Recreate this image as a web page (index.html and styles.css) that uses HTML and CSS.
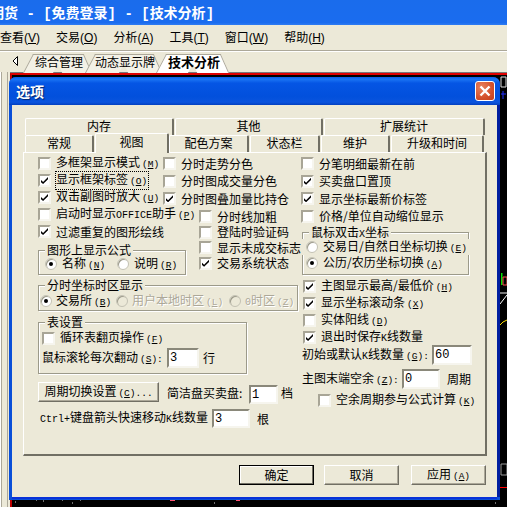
FILE: index.html
```html
<!DOCTYPE html>
<html lang="zh-CN">
<head>
  <meta charset="UTF-8">
  <title>选项</title>
  <link rel="stylesheet" href="styles.css">
</head>
<body>
  <div id="app">
    <div class="app-title">期货<span class="mono"> - [</span>免费登录<span class="mono">] - [</span>技术分析<span class="mono">]</span></div>

    <div class="menu">
      <span>查看<i>(<u>V</u>)</i></span>
      <span>交易<i>(<u>O</u>)</i></span>
      <span>分析<i>(<u>A</u>)</i></span>
      <span>工具<i>(<u>T</u>)</i></span>
      <span>窗口<i>(<u>W</u>)</i></span>
      <span>帮助<i>(<u>H</u>)</i></span>
    </div>

    <div class="main">
      <div class="side"></div>
      <div class="work">
        <div class="sheets">
          <svg class="sheet-arrow" width="7" height="10" viewBox="0 0 7 10"><path d="M5.5 .5 L1 5 L5.5 9.5 Z" fill="#fff" stroke="#000"/></svg>
          <span class="sheet">综合管理</span>
          <span class="sheet sheet-mid">动态显示牌</span>
          <span class="sheet sheet-on">技术分析</span>
        </div>
        <div class="chart">
          <!-- bits of the chart that stick out beside the dialog -->
          <svg class="chart-bits" width="497" height="434" viewBox="10 73 497 434">
            <path d="M501 77h5v10h-5z" fill="none" stroke="#ddd"/>
            <path d="M501 94h5M503 91v8" stroke="#2030ff"/>
            <path d="M501 273h1.500v12H501z" fill="#00e000"/>
            <path d="M503 277h4v8h-4z" fill="none" stroke="#ff5050"/>
            <path d="M500 292h7v2h-7z" fill="#777"/>
            <path d="M500 304l7-9" stroke="#fff"/>
            <path d="M500 325l3-3 4-2" stroke="#ffe000" fill="none"/>
            <path d="M501 464h6v11h-6z" fill="none" stroke="#999"/>
            <path d="M500 487.500h7" stroke="#f00"/>
            <path d="M170 500.500h5M236 500.500h4" stroke="#ff5070"/>
            <path d="M15 502h1M36 500h1M43 501h1M62 500h1M72 503h1M80 500h1M214 503h1M495 503h1" stroke="#ddd"/>
          </svg>
        </div>
      </div>
    </div>

    <div class="dialog">
      <div class="dialog-title">
        <span>选项</span>
        <button class="close">
          <svg width="12" height="12" viewBox="0 0 12 12"><path d="M1.500 1.500 L10.500 10.500 M10.500 1.500 L1.500 10.500" stroke="#fff" stroke-width="2.400"/></svg>
        </button>
      </div>

      <div class="dialog-body">
        <div class="tabs tabs-back">
          <div class="tab">内存</div>
          <div class="tab">其他</div>
          <div class="tab">扩展统计</div>
        </div>
        <div class="tabs tabs-front">
          <div class="tab">常规</div>
          <div class="tab tab-on">视图</div>
          <div class="tab">配色方案</div>
          <div class="tab">状态栏</div>
          <div class="tab">维护</div>
          <div class="tab">升级和时间</div>
        </div>

        <div class="page">
          <div class="left">
            <div class="upper">
              <div class="stack-a">
                <label class="check"><b class="box"></b><span>多框架显示模式<span class="key">(<u>M</u>)</span></span></label>
                <label class="check"><b class="box on"></b><span class="focus">显示框架标签<span class="key">(<u>O</u>)</span></span></label>
                <label class="check"><b class="box on"></b><span>双击副图时放大<span class="key">(<u>U</u>)</span></span></label>
                <label class="check"><b class="box"></b><span>启动时显示<span class="mono">OFFICE</span>助手<span class="key">(<u>P</u>)</span></span></label>
                <label class="check"><b class="box on"></b><span>过滤重复的图形绘线</span></label>

                <div class="group group-formula">
                  <span class="group-title">图形上显示公式</span>
                  <div class="radios">
                    <label class="radio radio-name"><b class="dot on"></b><span>名称<span class="key">(<u>N</u>)</span></span></label>
                    <label class="radio"><b class="dot"></b><span>说明<span class="key">(<u>R</u>)</span></span></label>
                  </div>
                </div>
              </div>

              <div class="stack-b">
                <label class="check wide"><b class="box"></b><span>分时走势分色</span></label>
                <label class="check wide"><b class="box"></b><span>分时图成交量分色</span></label>
                <label class="check wide"><b class="box on"></b><span>分时图叠加量比持仓</span></label>
                <label class="check thin first-thin"><b class="box"></b><span>分时线加粗</span></label>
                <label class="check thin"><b class="box"></b><span>登陆时验证码</span></label>
                <label class="check thin"><b class="box"></b><span>显示未成交标志</span></label>
                <label class="check thin"><b class="box on"></b><span>交易系统状态</span></label>
              </div>
            </div>

            <div class="group group-zone">
              <span class="group-title">分时坐标时区显示</span>
              <div class="zone-row">
                <label class="zone zone-1"><b class="dot on"></b><span>交易所<span class="key">(<u>B</u>)</span></span></label>
                <label class="zone zone-2 off"><b class="dot"></b><span>用户本地时区<span class="key">(<u>L</u>)</span></span></label>
                <label class="zone off"><b class="dot"></b><span><span class="mono">0</span>时区<span class="key">(<u>Z</u>)</span></span></label>
              </div>
            </div>

            <div class="group group-table">
              <span class="group-title">表设置</span>
              <label class="check"><b class="box"></b><span>循环表翻页操作<span class="key">(<u>F</u>)</span></span></label>
              <div class="field">
                <span class="cap-wheel">鼠标滚轮每次翻动<span class="key">(<u>S</u>):</span></span>
                <input class="num num-wheel" value="3">
                <span>行</span>
              </div>
            </div>

            <div class="cycle-row">
              <button class="btn btn-cycle">周期切换设置<span class="key">(<u>C</u>)...</span></button>
              <span class="cap-simple">简洁盘买卖盘:</span>
              <input class="num num-simple" value="1">
              <span>档</span>
            </div>

            <div class="field ctrl-row">
              <span class="cap-ctrl"><span class="mono">Ctrl+</span>键盘箭头快速移动<span class="mono">K</span>线数量</span>
              <input class="num num-ctrl" value="3">
              <span>根</span>
            </div>
          </div>

          <div class="right">
            <label class="check wide"><b class="box"></b><span>分笔明细最新在前</span></label>
            <label class="check wide"><b class="box on"></b><span>买卖盘口置顶</span></label>
            <label class="check wide"><b class="box on"></b><span>显示坐标最新价标签</span></label>
            <label class="check wide"><b class="box"></b><span>价格/单位自动缩位显示</span></label>

            <div class="group group-mouse">
              <span class="group-title">鼠标双击<span class="mono">X</span>坐标</span>
              <label class="radio-line radio-cover"><b class="dot"></b><span>交易日/自然日坐标切换<span class="key">(<u>E</u>)</span></span></label>
              <label class="radio-line"><b class="dot on"></b><span>公历/农历坐标切换<span class="key">(<u>A</u>)</span></span></label>
            </div>

            <div class="right-checks">
              <label class="check"><b class="box on"></b><span>主图显示最高/最低价<span class="key">(<u>H</u>)</span></span></label>
              <label class="check"><b class="box on"></b><span>显示坐标滚动条<span class="key">(<u>X</u>)</span></span></label>
              <label class="check"><b class="box"></b><span>实体阳线<span class="key">(<u>D</u>)</span></span></label>
              <label class="check"><b class="box on"></b><span>退出时保存<span class="mono">K</span>线数量</span></label>
            </div>

            <div class="field field-count">
              <span class="cap-count">初始或默认<span class="mono">K</span>线数量<span class="key">(<u>G</u>):</span></span>
              <input class="num num-count" value="60">
            </div>
            <div class="field field-tail">
              <span class="cap-tail">主图末端空余<span class="key">(<u>Z</u>):</span></span>
              <input class="num num-tail" value="0">
              <span>周期</span>
            </div>
            <label class="check check-formula"><b class="box"></b><span>空余周期参与公式计算<span class="key">(<u>K</u>)</span></span></label>
          </div>
        </div>

        <div class="actions">
          <button class="btn btn-ok">确定</button>
          <button class="btn btn-cancel">取消</button>
          <button class="btn btn-apply">应用<span class="key">(<u>A</u>)</span></button>
        </div>
      </div>
    </div>
  </div>
</body>
</html>
```

FILE: styles.css
```css
:root {
  --face: #ece9d8;
  --etch: #9c9a8a;
  --dark: #716f64;
}

* {
  box-sizing: border-box;
  margin: 0;
  padding: 0;
}

body {
  width: 507px;
  height: 507px;
  overflow: hidden;
  font-family: 'Noto Sans CJK SC', sans-serif;
  font-size: 12px;
  line-height: 14px;
  color: #000;
  background: var(--face);
}

#app {
  position: relative;
  width: 507px;
  height: 507px;
  display: flex;
  flex-direction: column;
}

.mono {
  font-family: 'Liberation Mono', monospace;
  font-size: 10px;
}

.key {
  font-family: 'Liberation Mono', monospace;
  font-size: 9.500px;
  margin-left: 2px;
}

/* main window */
.app-title {
  height: 25px;
  line-height: 24px;
  margin-left: -10px;
  font-size: 14px;
  font-weight: 700;
  color: #fff;
  white-space: pre;
  background: linear-gradient(#1a6cec, #1a6cef 90%, #2f7cf2);
  box-shadow: 10px 0 0 #1a6cec, -10px 0 0 #1a6cec;
}

.app-title .mono {
  font-size: 14px;
  font-weight: 700;
}

.menu {
  height: 25px;
  display: flex;
  align-items: center;
  gap: 16px;
  white-space: nowrap;
}

.menu i {
  font-family: 'Liberation Sans', sans-serif;
  font-style: normal;
}

.main {
  flex: 1;
  display: flex;
  min-height: 0;
  border-top: 1px solid #aca899;
  box-shadow: inset 0 1px 0 #fff;
}

.side {
  width: 10px;
  margin-top: 21px;
  border-left: 1px solid #fff;
  background: linear-gradient(90deg, #aca899 0 1px, var(--face) 1px 6px, #aca899 6px 7px, var(--face) 7px);
}

.work {
  flex: 1;
  display: flex;
  flex-direction: column;
}

.sheets {
  height: 22px;
  display: flex;
  align-items: flex-end;
  padding-left: 13px;
  position: relative;
}

.sheet-arrow {
  position: absolute;
  left: 2px;
  top: 5px;
}

.sheet {
  position: relative;
  isolation: isolate;
  height: 19px;
  line-height: 16px;
  padding: 0 10px 0 12px;
  white-space: nowrap;
}

.sheet::before,
.sheet::after {
  content: "";
  position: absolute;
  top: 0;
  bottom: 0;
  z-index: -1;
  background: #f3f1e6;
  border-top: 1px solid #aca899;
}

.sheet::before {
  left: 5px;
  right: 50%;
  transform: skewX(-28deg);
  border-left: 1px solid #aca899;
}

.sheet::after {
  left: 50%;
  right: 5px;
  transform: skewX(24deg);
  border-right: 1px solid #aca899;
}

.sheet-mid {
  margin-left: -8px;
  padding: 0 8px 0 10px;
}

.sheet-on {
  margin-left: -7px;
  font-size: 13px;
  font-weight: 700;
}

.sheet-on::before,
.sheet-on::after {
  background: #fff;
}

.chart {
  flex: 1;
  background: #000;
  border-top: 2px solid #e00000;
  border-left: 2px solid #c00000;
  box-shadow: 0 -1px 0 #777;
}

.chart-bits {
  position: absolute;
  left: 10px;
  top: 73px;
}

/* dialog */
.dialog {
  position: absolute;
  left: 9px;
  top: 77px;
  width: 491px;
  height: 423px;
  display: flex;
  flex-direction: column;
  border-radius: 7px 7px 0 0;
  background: #0a4fd8;
}

.dialog-title {
  height: 28px;
  flex: none;
  display: flex;
  align-items: center;
  justify-content: space-between;
  padding: 0 5px 0 7px;
  border-radius: 7px 7px 0 0;
  background: linear-gradient(#0a5ae6, #1a74f4 8%, #0555e4 22%, #0250dc 70%, #0a54de 90%, #0340c0);
  font-size: 14px;
  font-weight: 700;
  color: #fff;
  text-shadow: 1px 1px 1px #02256e;
}

.close {
  width: 20px;
  height: 20px;
  display: flex;
  align-items: center;
  justify-content: center;
  border: 1px solid #fff;
  border-radius: 3px;
  background: radial-gradient(circle at 30% 30%, #e8825f, #d4512c 60%, #c33e1c);
}

.dialog-body {
  flex: 1;
  margin: 0 3px 3px;
  padding: 13px 0 0 11px;
  background: var(--face);
  box-shadow: 1px 0 0 #001ea0, 2px 0 0 #001ea0, 3px 0 0 #001ea0, 0 2px 0 #0831d9;
}

.tabs {
  display: grid;
  column-gap: 1px;
  margin-left: 2px;
}

.tabs-back {
  grid-template-columns: 149px 148px 161px;
}

.tabs-front {
  grid-template-columns: 69px 73px 80px 70px 69px 93px;
}

.tab {
  height: 17px;
  line-height: 14px;
  text-align: center;
  background: var(--face);
  border-top: 1px solid #fff;
  border-left: 1px solid #fff;
  border-right: 2px solid var(--dark);
  border-radius: 2px 2px 0 0;
}

.tab-on {
  position: relative;
  z-index: 1;
  height: 20px;
  margin: -2px -1px -1px 0;
  line-height: 15px;
}

.page {
  height: 304px;
  display: flex;
  gap: 3px;
  padding: 2px 0 0 14px;
  width: 464px;
  border: 1px solid #fff;
  border-right: 2px solid var(--dark);
  border-bottom: 2px solid var(--dark);
}

.left {
  width: 260px;
  flex: none;
}

.upper {
  display: flex;
}

.stack-a {
  width: 125px;
  flex: none;
}

.check {
  height: 17px;
  display: flex;
  align-items: center;
  white-space: nowrap;
}

.wide {
  height: 17.500px;
}

.thin {
  height: 15.500px;
  margin-left: 36px;
}

.first-thin {
  margin-top: 1.500px;
}

.box {
  width: 13px;
  height: 13px;
  flex: none;
  margin-right: 5px;
  display: flex;
  align-items: center;
  justify-content: center;
  background: #fff;
  border: 2px solid;
  border-color: #a8a596 #f6f5ee #f6f5ee #a8a596;
}

.box.on::after {
  content: "";
  width: 7px;
  height: 7px;
  background: #000;
  clip-path: polygon(0 42%, 30% 72%, 100% 0, 100% 32%, 30% 100%, 0 74%);
}

.focus {
  outline: 1px dotted #000;
  outline-offset: 0;
  padding-right: 1px;
}

.dot {
  position: relative;
  width: 12px;
  height: 12px;
  flex: none;
  margin-right: 5px;
  display: block;
  border-radius: 50%;
  background: #fff;
  border: 1px solid #c4c2b4;
  box-shadow: inset 1px 1px 0 #9c9a8a;
}

.dot.on::after {
  content: "";
  position: absolute;
  left: 3px;
  top: 3px;
  width: 4px;
  height: 4px;
  border-radius: 50%;
  background: #000;
}

.group {
  position: relative;
  border: 1px solid var(--etch);
  box-shadow: 1px 1px 0 #fff, inset 1px 1px 0 #fff;
}

.group-title {
  position: absolute;
  top: -7px;
  left: 6px;
  padding: 0 2px;
  line-height: 12px;
  white-space: nowrap;
  background: var(--face);
}

.group-formula {
  width: 148px;
  height: 25px;
  margin-top: 10px;
  padding: 5px 0 0 6px;
}

.radios {
  display: flex;
  height: 16px;
}

.radio {
  display: flex;
  align-items: center;
  white-space: nowrap;
}

.radio-name {
  width: 72px;
}

.stack-b {
  flex: 1;
}

.group-zone {
  height: 26px;
  margin-top: 10px;
  padding: 7px 0 0 1px;
}

.zone-row {
  display: flex;
  height: 16px;
}

.zone {
  display: flex;
  align-items: center;
  white-space: nowrap;
}

.zone .dot {
  margin-right: 4px;
}

.zone-1 {
  width: 76px;
}

.zone-2 {
  width: 113px;
}

.off {
  color: #aca899;
  text-shadow: 1px 1px 0 #fff;
}

.off .dot {
  background: var(--face);
}

.group-table {
  width: 209px;
  height: 52px;
  margin-top: 11px;
  padding: 7px 0 0 3px;
}

.field {
  display: flex;
  align-items: center;
  white-space: nowrap;
}

.group-table .field {
  margin-top: 1px;
}

.cap-wheel {
  width: 125px;
}

.num {
  height: 20px;
  padding: 0 1px;
  font-family: 'Liberation Mono', monospace;
  font-size: 12px;
  background: #fff;
  border: 2px solid;
  border-color: #8a887a #f6f5ee #f6f5ee #8a887a;
  border-radius: 0;
  outline: none;
}

.num-wheel {
  width: 32px;
  margin-right: 4px;
}

.cycle-row {
  height: 22px;
  margin-top: 8px;
  display: flex;
  align-items: center;
  white-space: nowrap;
}

.btn {
  font-family: inherit;
  font-size: 12px;
  line-height: 14px;
  color: #000;
  background: var(--face);
  border: 1px solid;
  border-color: #fff var(--dark) var(--dark) #fff;
  box-shadow: inset -1px -1px 0 #aca899;
}

.btn-cycle {
  width: 121px;
  height: 20px;
  margin-right: 8px;
  align-self: flex-start;
  white-space: nowrap;
}

.cap-simple {
  width: 82px;
}

.num-simple {
  width: 29px;
  height: 19px;
  margin-right: 3px;
  align-self: flex-start;
  margin-top: 3px;
}

.ctrl-row {
  margin: 5px 0 0 2px;
}

.cap-ctrl {
  width: 172px;
}

.num-ctrl {
  width: 38px;
  height: 19px;
  margin-right: 7px;
}

.group-mouse {
  width: 167px;
  height: 43px;
  margin: 7px 0 0 1px;
  padding-top: 6px;
}

.radio-line {
  height: 16px;
  display: flex;
  align-items: center;
  padding-left: 3px;
  white-space: nowrap;
}

.radio-cover {
  position: relative;
  margin: 0 -2px 0 -1px;
  padding-left: 4px;
  background: var(--face);
}

.right-checks {
  margin: 3px 0 0 2px;
}

.field-count {
  margin: -1px 0 0 1px;
}

.cap-count {
  width: 130px;
}

.num-count {
  width: 40px;
}

.field-tail {
  margin: 4px 0 0 1px;
}

.cap-tail {
  width: 100px;
}

.num-tail {
  width: 38px;
  margin-right: 7px;
}

.check-formula {
  margin: 3px 0 0 17px;
}

.actions {
  width: 463px;
  margin-top: 9px;
  display: flex;
  justify-content: flex-end;
}

.actions .btn {
  width: 75px;
  height: 20px;
}

.btn-ok {
  border: 1px solid #000;
  box-shadow: inset -1px -1px 0 var(--dark), inset 1px 1px 0 #fff;
}

.btn-cancel {
  margin: 0 12px 0 10px;
}
```
